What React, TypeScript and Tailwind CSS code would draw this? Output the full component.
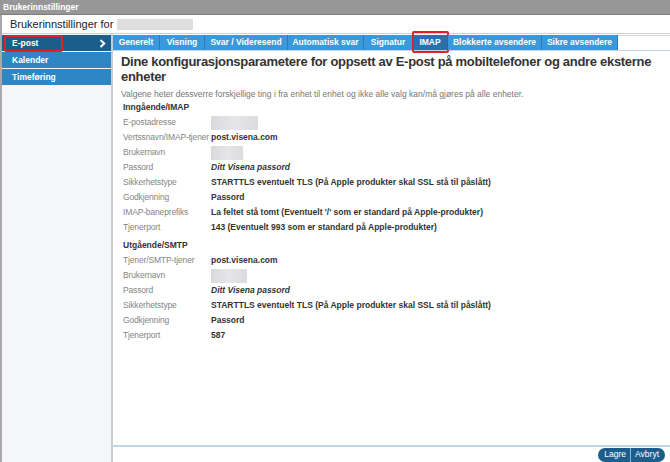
import React from "react";

const Blur = ({ w }: { w: number }) => (
  <div
    className="h-[14px] bg-gradient-to-r from-[#d9d9db] via-[#e6e6e8] to-[#dcdcde]"
    style={{ width: w }}
  />
);

type Row = { label: string; value?: string; blur?: number; italic?: boolean };

const imap: Row[] = [
  { label: "E-postadresse", blur: 47 },
  { label: "Vertssnavn/IMAP-tjener", value: "post.visena.com" },
  { label: "Brukernavn", blur: 32 },
  { label: "Passord", value: "Ditt Visena passord", italic: true },
  { label: "Sikkerhetstype", value: "STARTTLS eventuelt TLS (På Apple produkter skal SSL stå til påslått)" },
  { label: "Godkjenning", value: "Passord" },
  { label: "IMAP-baneprefiks", value: "La feltet stå tomt (Eventuelt '/' som er standard på Apple-produkter)" },
  { label: "Tjenerport", value: "143 (Eventuelt 993 som er standard på Apple-produkter)" },
];

const smtp: Row[] = [
  { label: "Tjener/SMTP-tjener", value: "post.visena.com" },
  { label: "Brukernavn", blur: 36 },
  { label: "Passord", value: "Ditt Visena passord", italic: true },
  { label: "Sikkerhetstype", value: "STARTTLS eventuelt TLS (På Apple produkter skal SSL stå til påslått)" },
  { label: "Godkjenning", value: "Passord" },
  { label: "Tjenerport", value: "587" },
];

const tabs: { name: string; w: number; active?: boolean }[] = [
  { name: "Generelt", w: 47 },
  { name: "Visning", w: 45 },
  { name: "Svar / Videresend", w: 83 },
  { name: "Automatisk svar", w: 76 },
  { name: "Signatur", w: 49 },
  { name: "IMAP", w: 35, active: true },
  { name: "Blokkerte avsendere", w: 94 },
  { name: "Sikre avsendere", w: 76 },
];

function Rows({ rows }: { rows: Row[] }) {
  return (
    <div className="flex flex-col">
      {rows.map((r, i) => (
        <div key={i} className="flex h-[15px] items-center">
          <div className="w-[88px] shrink-0 text-[#858585] whitespace-nowrap tracking-[-0.15px]">{r.label}</div>
          {r.blur ? (
            <Blur w={r.blur} />
          ) : (
            <div className={"font-bold text-[#333] whitespace-nowrap " + (r.italic ? "italic" : "")}>
              {r.value}
            </div>
          )}
        </div>
      ))}
    </div>
  );
}

export default function App() {
  return (
    <div
      className="w-[670px] h-[462px] flex flex-col bg-white overflow-hidden"
      style={{ fontFamily: '"Liberation Sans", Arial, sans-serif' }}
    >
      <div className="h-[15px] shrink-0 bg-[#979797] border-b border-[#7d7d7d] flex items-center pl-[3px] text-white font-bold text-[8.5px]">
        Brukerinnstillinger
      </div>
      <div className="flex flex-1 min-h-0 border-l-2 border-[#a9a9a9]">
        <div className="flex flex-col flex-1 min-w-0">
          <div className="h-[19px] shrink-0 flex items-center gap-[4px] pl-[8px] border-b border-[#d0d0d0]">
            <span className="text-[11px] text-[#222] leading-none">Brukerinnstillinger for</span>
            <div className="w-[76px] h-[11px] bg-[#dedee0]" />
          </div>
          <div className="flex flex-1 min-h-0">
            <div className="w-[111px] shrink-0 bg-[#f4f6f9] border-r-2 border-[#c9ccd1] pt-[1px] flex flex-col gap-[1px]">
              <div className="relative h-[16px] bg-[#1b5e8c] flex items-center justify-between pl-[10px] pr-[5px] text-white font-bold text-[8.5px]">
                <span>E-post</span>
                <svg width="7" height="9" viewBox="0 0 7 9">
                  <path d="M1.5 1 L5.2 4.5 L1.5 8" stroke="white" strokeWidth="2" fill="none" />
                </svg>
                <div className="absolute left-[2px] top-[0px] w-[59px] h-[17px] border-2 border-[#e0202a] rounded-[2px]" />
              </div>
              <div className="h-[16px] bg-[#2e87c4] flex items-center pl-[10px] text-white font-bold text-[8.5px]">
                Kalender
              </div>
              <div className="h-[16px] bg-[#2e87c4] flex items-center pl-[10px] text-white font-bold text-[8.5px]">
                Timeføring
              </div>
            </div>
            <div className="flex flex-col flex-1 min-w-0">
              <div className="h-[16px] mt-[1px] shrink-0 flex border-b border-[#c9d6e2]">
                {tabs.map((t) => (
                  <div
                    key={t.name}
                    className={
                      "relative h-full flex items-center justify-center text-white font-bold text-[8.5px] whitespace-nowrap border-r border-[#2b7bb8] " +
                      (t.active ? "bg-[#2673ab]" : "bg-[#3a98dc]")
                    }
                    style={{ width: t.w }}
                  >
                    {t.name}
                    {t.active && (
                      <div className="absolute left-[-1px] top-[-4px] w-[37px] h-[22px] border-2 border-[#e0202a] rounded-[2px]" />
                    )}
                  </div>
                ))}
                <div className="flex-1 border-t border-[#d6d6d6]" />
              </div>
              <div className="flex-1 min-h-0 pl-[8px] pt-[3px] text-[8.5px]">
                <h1 className="text-[13px] font-bold leading-[15px] text-[#333] tracking-[-0.3px]">
                  Dine konfigurasjonsparametere for oppsett av E-post på mobiltelefoner og andre eksterne enheter
                </h1>
                <p className="mt-[5px] text-[#777] leading-[11px]">
                  Valgene heter dessverre forskjellige ting i fra enhet til enhet og ikke alle valg kan/må gjøres på alle enheter.
                </p>
                <div className="pl-[2px]">
                  <div className="h-[15px] flex items-center font-bold text-[#333]">Inngående/IMAP</div>
                  <Rows rows={imap} />
                  <div className="h-[15px] mt-[3px] flex items-center font-bold text-[#333]">Utgående/SMTP</div>
                  <Rows rows={smtp} />
                </div>
              </div>
              <div className="h-[17px] shrink-0 border-t-2 border-[#bcd5ea] flex items-center justify-end pr-[5px]">
                <div className="flex h-[14px] rounded-full bg-[#1b5e8c] text-white text-[8.5px] overflow-hidden">
                  <div className="px-[4px] pl-[6px] flex items-center border-r border-[#8fb3d0]">Lagre</div>
                  <div className="px-[4px] pr-[6px] flex items-center">Avbryt</div>
                </div>
              </div>
            </div>
          </div>
        </div>
      </div>
    </div>
  );
}
